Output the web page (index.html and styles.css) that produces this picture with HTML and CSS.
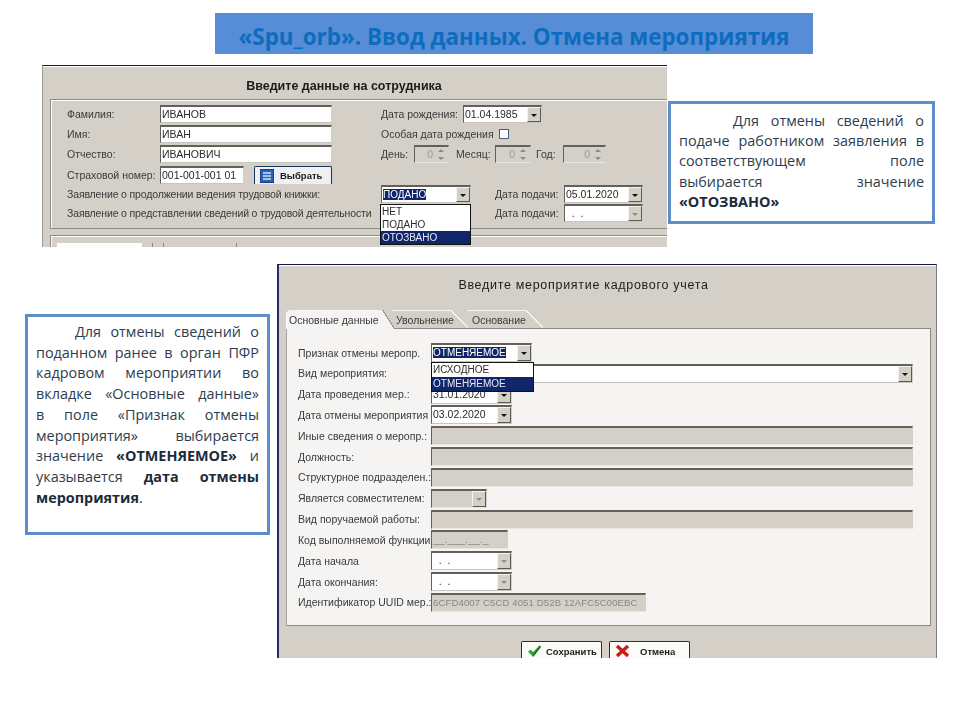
FILE: index.html
```html
<!DOCTYPE html>
<html lang="ru">
<head>
  <meta charset="UTF-8" />
  <title>Spu_orb. Отмена мероприятия</title>
  <link rel="stylesheet" href="styles.css">
</head>
<body>
  <div class="slide">
    <h1 class="slide-title">«Spu_orb». Ввод данных. Отмена мероприятия</h1>

    <!-- окно: данные на сотрудника -->
    <div class="window window-emp">
      <div class="window-title">Введите данные на сотрудника</div>
      <div class="group">
        <div class="row row-1">
          <span class="lbl w93">Фамилия:</span>
          <span class="field w172">ИВАНОВ</span>
          <span class="lbl w82 ml49">Дата рождения:</span>
          <span class="field combo w79">01.04.1985<i class="arrow"></i></span>
        </div>
        <div class="row row-2">
          <span class="lbl w93">Имя:</span>
          <span class="field w172">ИВАН</span>
          <span class="lbl w118 ml49">Особая дата рождения</span>
          <span class="check"></span>
        </div>
        <div class="row row-3">
          <span class="lbl w93">Отчество:</span>
          <span class="field w172">ИВАНОВИЧ</span>
          <span class="lbl w33 ml49">День:</span>
          <span class="field spin w35 off">0<i class="spin-btns"><b></b><b></b></i></span>
          <span class="lbl w39 ml7">Месяц:</span>
          <span class="field spin w36 off">0<i class="spin-btns"><b></b><b></b></i></span>
          <span class="lbl w27 ml5">Год:</span>
          <span class="field spin w43 off">0<i class="spin-btns"><b></b><b></b></i></span>
        </div>
        <div class="row row-4">
          <span class="lbl w93">Страховой номер:</span>
          <span class="field w84">001-001-001 01</span>
          <span class="btn btn-pick">
            <svg width="14" height="14" viewBox="0 0 14 14"><rect x="0.5" y="0.5" width="13" height="13" fill="#2a62b8" stroke="#16408a"/><path d="M3 4h8M3 7h8M3 10h8" stroke="#cfe0f6" stroke-width="1.4"/></svg>
            <span>Выбрать</span>
          </span>
        </div>
        <div class="row row-5">
          <span class="lbl lbl-long w314">Заявление о продолжении ведения трудовой книжки:</span>
          <span class="field combo w90"><em class="sel">ПОДАНО</em><i class="arrow"></i></span>
          <span class="lbl w69 ml24">Дата подачи:</span>
          <span class="field combo w79">05.01.2020<i class="arrow"></i></span>
        </div>
        <div class="row row-6">
          <span class="lbl lbl-long w314">Заявление о представлении сведений о трудовой деятельности</span>
          <span class="w90"></span>
          <span class="lbl w69 ml24">Дата подачи:</span>
          <span class="field combo w79">&nbsp;&nbsp;.&nbsp;&nbsp;.<i class="arrow arrow-off"></i></span>
        </div>
        <ul class="dropdown dropdown-emp">
          <li>НЕТ</li>
          <li>ПОДАНО</li>
          <li class="active">ОТОЗВАНО</li>
        </ul>
      </div>
      <div class="table-box">
        <span class="tab-cell"></span>
        <span class="col col-a"></span>
        <span class="col col-b"></span>
      </div>
    </div>

    <aside class="note note-top">
      <p>Для отмены сведений о подаче работником заявления в соответствующем поле выбирается значение <b>«ОТОЗВАНО»</b></p>
    </aside>

    <aside class="note note-left">
      <p>Для отмены сведений о поданном ранее в орган ПФР кадровом мероприятии во вкладке «Основные данные» в&nbsp;поле «Признак отмены мероприятия» выбирается значение <b>«ОТМЕНЯЕМОЕ»</b> и указывается <b>дата отмены мероприятия</b>.</p>
    </aside>

    <!-- окно: мероприятие кадрового учета -->
    <div class="window window-event">
      <div class="window-title">Введите мероприятие кадрового учета</div>
      <div class="tabs">
        <span class="tab tab-active">Основные данные</span>
        <span class="tab tab-2">Увольнение</span>
        <span class="tab tab-3">Основание</span>
      </div>
      <div class="tab-page">
        <div class="form">
          <span class="lbl">Признак отмены меропр.</span>
          <span class="field combo w101"><em class="sel">ОТМЕНЯЕМОЕ</em><i class="arrow"></i></span>
          <span class="lbl">Вид мероприятия:</span>
          <span class="field combo wfull"><i class="arrow"></i></span>
          <span class="lbl">Дата проведения мер.:</span>
          <span class="field combo w81">31.01.2020<i class="arrow"></i></span>
          <span class="lbl">Дата отмены мероприятия</span>
          <span class="field combo w81">03.02.2020<i class="arrow"></i></span>
          <span class="lbl">Иные сведения о меропр.:</span>
          <span class="field off wfull"></span>
          <span class="lbl">Должность:</span>
          <span class="field off wfull"></span>
          <span class="lbl">Структурное подразделен.:</span>
          <span class="field off wfull"></span>
          <span class="lbl">Является совместителем:</span>
          <span class="field combo off w56"><i class="arrow arrow-off"></i></span>
          <span class="lbl">Вид поручаемой работы:</span>
          <span class="field off wfull"></span>
          <span class="lbl">Код выполняемой функции</span>
          <span class="field off w77 dim">__.___.__._</span>
          <span class="lbl">Дата начала</span>
          <span class="field combo w81">&nbsp;&nbsp;.&nbsp;&nbsp;.<i class="arrow arrow-off"></i></span>
          <span class="lbl">Дата окончания:</span>
          <span class="field combo w81">&nbsp;&nbsp;.&nbsp;&nbsp;.<i class="arrow arrow-off"></i></span>
          <span class="lbl">Идентификатор UUID мер.:</span>
          <span class="field off w215 dim uuid">6CFD4007 C5CD 4051 D52B 12AFC5C00EBC</span>
        </div>
        <ul class="dropdown dropdown-event">
          <li>ИСХОДНОЕ</li>
          <li class="active">ОТМЕНЯЕМОЕ</li>
        </ul>
      </div>
      <div class="actions">
        <span class="btn btn-save">
          <svg width="15" height="14" viewBox="0 0 15 14"><path d="M1 7.5 L3.8 5.8 L6 8.2 L12.6 1.5 L14 2.8 L6.2 13 Z" fill="#2c9e2c"/><path d="M6.2 13 L14 2.8 L12.6 1.5 L7 9.5 Z" fill="#167a1c"/></svg>
          <span>Сохранить</span>
        </span>
        <span class="btn btn-cancel">
          <svg width="15" height="14" viewBox="0 0 15 14"><path d="M2 2 L13 12 M13 2 L2 12" stroke="#cc1c18" stroke-width="3.4"/></svg>
          <span>Отмена</span>
        </span>
      </div>
    </div>
  </div>
</body>
</html>
```

FILE: styles.css
```css
body {
  margin: 0;
  background: #fff;
  font-family: "Liberation Sans", Arial, sans-serif;
}

.slide {
  position: relative;
  width: 960px;
  height: 720px;
  overflow: hidden;
  background: #fff;
}

.slide-title {
  position: absolute;
  left: 215px;
  top: 13px;
  width: 598px;
  height: 41px;
  margin: 0;
  background: #568dd6;
  color: #0d6cbd;
  font-family: "Open Sans", sans-serif;
  font-size: 22.4px;
  font-weight: 700;
  line-height: 47px;
  text-align: center;
  white-space: nowrap;
}

/* окна программы */
.window {
  position: absolute;
  box-sizing: border-box;
  overflow: hidden;
  background: #d4d0c8;
  border-top: 1px solid #14124e;
  color: #3a3a3a;
  font-size: 10.5px;
  filter: blur(0.35px);
}

.window-emp {
  left: 42px;
  top: 65px;
  width: 625px;
  height: 182px;
  border-left: 1px solid #9b9a96;
}

.window-event {
  left: 277px;
  top: 264px;
  width: 660px;
  height: 394px;
  border-left: 2px solid #2c2c66;
  border-right: 1px solid #7d7d7d;
}

.window-title {
  height: 32px;
  border-top: 1px solid #fff;
  color: #1c1c1c;
  font-size: 12.5px;
  line-height: 38px;
  text-align: center;
}

.window-emp .window-title {
  padding-right: 22px;
  font-weight: 700;
}

.window-event .window-title {
  padding-right: 48px;
  letter-spacing: 0.7px;
}

.group {
  position: relative;
  height: 123px;
  margin-left: 7px;
  padding: 5px 0 0 16px;
  border-top: 1px solid #8c8a84;
  border-left: 1px solid #8c8a84;
  border-bottom: 1px solid #8c8a84;
  box-shadow: inset 1px 1px 0 #fff;
}

.row {
  display: flex;
  align-items: center;
  height: 18px;
  margin-bottom: 2px;
}

.row-3 { margin-bottom: 3px; }
.row-4 { margin-bottom: 1px; }
.row-5 { margin-bottom: 1px; }

.lbl {
  overflow: hidden;
  white-space: nowrap;
}

.lbl-long { letter-spacing: -0.15px; }

.w27 { width: 27px; }
.w33 { width: 33px; }
.w35 { width: 35px; }
.w36 { width: 36px; }
.w39 { width: 39px; }
.w43 { width: 43px; }
.w56 { width: 56px; }
.w69 { width: 69px; }
.w77 { width: 77px; }
.w79 { width: 79px; }
.w81 { width: 81px; }
.w82 { width: 82px; }
.w84 { width: 84px; }
.w90 { width: 90px; }
.w93 { width: 93px; }
.w101 { width: 101px; }
.w118 { width: 118px; }
.w172 { width: 172px; }
.w215 { width: 215px; }
.w314 { width: 314px; }
.wfull { width: 482px; }

.ml5 { margin-left: 5px; }
.ml7 { margin-left: 7px; }
.ml24 { margin-left: 24px; }
.ml49 { margin-left: 49px; }

.field {
  position: relative;
  display: block;
  box-sizing: border-box;
  flex: none;
  height: 18px;
  padding-left: 1px;
  overflow: hidden;
  background: #fff;
  border-top: 2px solid #62605a;
  border-left: 1px solid #62605a;
  border-right: 1px solid #d4d0c8;
  border-bottom: 1px solid #c8c5bd;
  color: #2a2a2a;
  line-height: 15px;
  white-space: nowrap;
}

.field.off {
  background: #d4d0c8;
  border-bottom-color: #e8e6e0;
}

.field.dim { color: #8a8882; }

.uuid {
  font-size: 9.6px;
  letter-spacing: 0.1px;
}

.spin { text-align: right; padding-right: 15px; color: #999; }

.sel {
  background: #10266a;
  color: #fff;
  font-size: 10px;
  font-style: normal;
}

.arrow,
.spin-btns {
  position: absolute;
  top: 0;
  right: 0;
  bottom: 0;
  width: 14px;
  box-sizing: border-box;
  background: #d4d0c8;
  border-top: 1px solid #f4f3f0;
  border-left: 1px solid #f4f3f0;
  border-right: 1px solid #5c5a55;
  border-bottom: 1px solid #5c5a55;
}

.arrow::after {
  content: "";
  position: absolute;
  left: 3px;
  top: 6px;
  border-top: 3px solid #111;
  border-left: 3px solid transparent;
  border-right: 3px solid transparent;
}

.arrow-off::after { border-top-color: #8d8b86; }

.spin-btns {
  display: flex;
  flex-direction: column;
  justify-content: space-around;
  align-items: center;
  border-width: 0;
}

.spin-btns b {
  border-left: 3px solid transparent;
  border-right: 3px solid transparent;
  border-bottom: 3px solid #8d8b86;
}

.spin-btns b + b {
  border-bottom: 0;
  border-top: 3px solid #8d8b86;
}

.check {
  width: 10px;
  height: 10px;
  background: #fff;
  border: 1px solid #40608c;
  box-sizing: border-box;
}

.btn {
  display: flex;
  align-items: center;
  gap: 9px;
  box-sizing: border-box;
  width: 81px;
  height: 19px;
  padding-left: 5px;
  background: #fbfbf8;
  border: 1px solid #17335f;
  border-bottom: 0;
  border-radius: 2px 2px 0 0;
  color: #1c1c1c;
  font-size: 9.5px;
  font-weight: 700;
  white-space: nowrap;
}

.btn-save { gap: 4px; }
.btn-cancel { gap: 10px; }

.btn-pick {
  width: 78px;
  height: 18px;
  margin-left: 10px;
  gap: 6px;
  background: #eef0f2;
}

.dropdown {
  position: absolute;
  margin: 0;
  padding: 0;
  list-style: none;
  box-sizing: border-box;
  background: #fff;
  border: 1px solid #111;
  color: #2a2a2a;
  font-size: 10px;
}

.dropdown li {
  height: 13px;
  padding-left: 1px;
  line-height: 13px;
}

.dropdown li.active {
  background: #10266a;
  color: #e8e8f2;
}

.dropdown-emp {
  left: 329px;
  top: 104px;
  width: 91px;
}

.dropdown-event {
  left: 144px;
  top: 33px;
  width: 103px;
}

.dropdown-event li { height: 14px; line-height: 14px; }

.table-box {
  display: flex;
  box-sizing: border-box;
  height: 20px;
  margin: 6px 0 0 7px;
  padding: 7px 0 0 6px;
  border-top: 1px solid #8c8a84;
  border-left: 1px solid #8c8a84;
  box-shadow: inset 1px 1px 0 #fff;
}

.tab-cell {
  width: 85px;
  background: #fff;
}

.col {
  border-left: 1px solid #8c8a84;
}

.col-a { width: 10px; margin-left: 10px; }
.col-b { width: 72px; border-right: 1px solid #8c8a84; }

/* вкладки */
.tabs {
  position: relative;
  z-index: 1;
  display: flex;
  height: 19px;
  margin: 12px 0 -1px 7px;
}

.tab {
  position: relative;
  box-sizing: border-box;
  width: 58px;
  padding: 3px 0 0 4px;
  border-top: 1px solid #f6f5f2;
  white-space: nowrap;
}

.tab::after {
  content: "";
  position: absolute;
  z-index: -1;
  top: -1px;
  left: 100%;
  width: 18px;
  height: 18px;
  background: linear-gradient(to top right, #d4d0c8 48%, #f6f5f2 49%, #f6f5f2 53%, transparent 54%);
}

.tab-active {
  width: 96px;
  padding-left: 3px;
  background: #f5f4f2;
  border-top-left-radius: 5px;
  box-shadow: inset 1px 0 0 #fff;
}

.tab-active::after {
  z-index: 1;
  width: 12px;
  height: 19px;
  background: linear-gradient(to top right, #f5f4f2 49%, #9c9a94 50%, #9c9a94 55%, transparent 56%);
}

.tab-2 { margin-left: 10px; }
.tab-3 { margin-left: 17px; padding-left: 5px; }

.tab-page {
  position: relative;
  box-sizing: border-box;
  width: 645px;
  height: 298px;
  margin-left: 7px;
  padding: 14px 0 0 11px;
  background: #f5f4f2;
  border-top: 1px solid #8c8a84;
  border-right: 1px solid #8c8a84;
  border-bottom: 1px solid #8c8a84;
  border-left: 1px solid #a5a39d;
}

.form {
  display: grid;
  grid-template-columns: 133px auto;
  grid-auto-rows: 19px;
  row-gap: 1.83px;
  justify-items: start;
  align-items: center;
}

.form .field { height: 19px; }
.form .lbl { width: 133px; }

/* кнопки внизу окна */
.actions {
  display: flex;
  gap: 7px;
  margin: 15px 0 0 242px;
}

/* пояснения */
.note {
  position: absolute;
  box-sizing: border-box;
  background: #fff;
  border: 3px solid #5f8dca;
  color: #2e3d4e;
  font-family: "Open Sans", sans-serif;
  font-size: 14.4px;
}

.note p {
  margin: 0;
  text-align: justify;
}

.note b { color: #1d2b3a; }

.note-top {
  left: 668px;
  top: 101px;
  width: 267px;
  height: 123px;
  padding: 7px 8px 0;
  line-height: 20.2px;
}

.note-top p { text-indent: 54px; }

.note-left {
  left: 25px;
  top: 314px;
  width: 245px;
  height: 221px;
  padding: 5px 8px 0;
  line-height: 20.7px;
}

.note-left p { text-indent: 39px; }
```
